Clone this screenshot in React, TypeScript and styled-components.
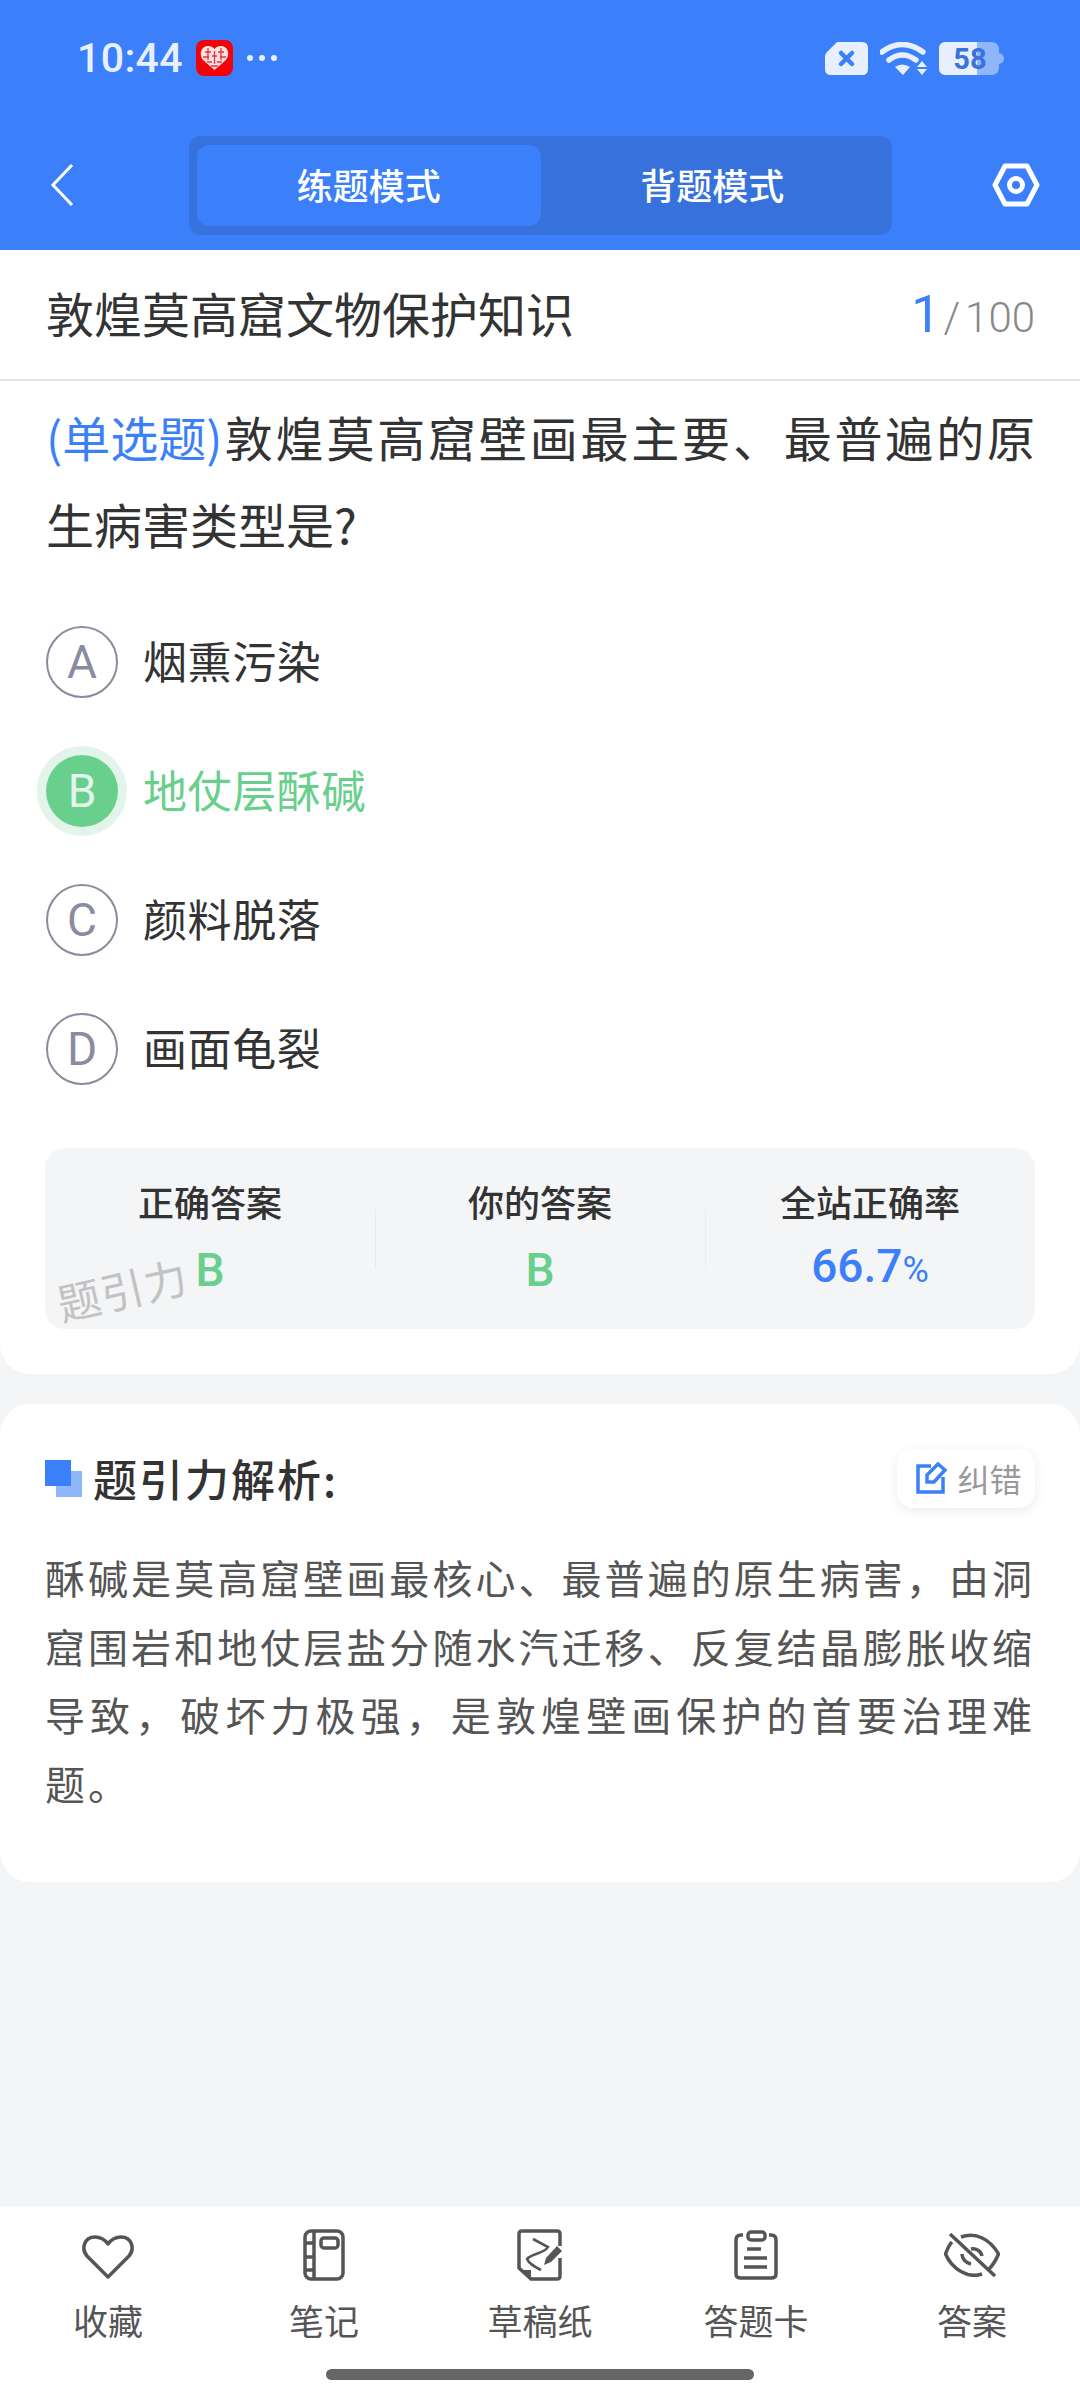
import React from "react";
import styled, { createGlobalStyle } from "styled-components";

const FONT = `"Noto Sans CJK SC", "Noto Sans", Roboto, sans-serif`;

const Global = createGlobalStyle`
  html, body {
    margin: 0;
    padding: 0;
    background: #f4f5f7;
    font-family: ${FONT};
  }
  * { box-sizing: border-box; }
`;

const Page = styled.div`
  width: 1080px;
  height: 2400px;
  display: flex;
  flex-direction: column;
  background: #f4f5f7;
  overflow: hidden;
`;

const Header = styled.div`
  height: 250px;
  background: #3b7ffa;
  color: #fff;
  flex-shrink: 0;
`;

const StatusBar = styled.div`
  height: 122px;
  padding: 0 76px 6px 77px;
  display: flex;
  align-items: center;
  justify-content: space-between;
`;

const StatusGroup = styled.div<{ $gap: number }>`
  display: flex;
  align-items: center;
  gap: ${(p) => p.$gap}px;
`;

const Time = styled.span`
  font-family: Roboto, sans-serif;
  font-size: 41px;
  font-weight: 500;
  letter-spacing: 0.4px;
  color: #e8f0ff;
`;

const Nav = styled.div`
  height: 128px;
  padding: 13px 40px 15px 50px;
  display: flex;
  align-items: center;
`;

const Tabs = styled.div`
  width: 703px;
  height: 99px;
  margin: 0 auto 0 115px;
  padding: 9px 8px;
  display: flex;
  background: #3671dc;
  border-radius: 12px;
`;

const Tab = styled.div<{ $active?: boolean }>`
  flex: 1;
  display: flex;
  align-items: center;
  justify-content: center;
  padding-bottom: 2px;
  border-radius: 12px;
  font-size: 36px;
  font-weight: 500;
  color: #fff;
  background: ${(p) => (p.$active ? "#3b7ffa" : "transparent")};
`;

const QuestionCard = styled.div`
  height: 1124px;
  background: #fff;
  border-radius: 0 0 30px 30px;
  flex-shrink: 0;
`;

const TitleRow = styled.div`
  height: 131px;
  padding: 0 45px 6px 46px;
  display: flex;
  align-items: center;
  justify-content: space-between;
  border-bottom: 2px solid #e4e4e6;
`;

const Title = styled.div`
  font-size: 48px;
  color: #333;
`;

const Progress = styled.div`
  display: flex;
  align-items: baseline;
  margin-top: 6px;
  font-family: Roboto, sans-serif;
  font-size: 42px;
  font-weight: 300;
  color: #888;
`;

const ProgressNow = styled.span`
  font-size: 52px;
  font-weight: 400;
  color: #3b7ffa;
  margin-right: 3px;
`;

const ProgressSlash = styled.span`
  margin-right: 5px;
`;

const QuestionText = styled.div`
  padding: 12px 45px 0 46px;
  font-size: 48px;
  line-height: 87px;
  color: #333;
  text-align: justify;
`;

const QType = styled.span`
  display: inline-block;
  width: 180px;
  margin-right: -4px;
  white-space: nowrap;
  color: #3b7ffa;
`;

const Options = styled.div`
  margin-top: 30px;
  padding: 0 46px;
`;

const OptionRow = styled.div`
  height: 129px;
  display: flex;
  align-items: center;
  gap: 25px;
`;

const OptionMark = styled.div<{ $right?: boolean }>`
  width: 72px;
  height: 72px;
  border-radius: 50%;
  display: flex;
  align-items: center;
  justify-content: center;
  font-family: Roboto, sans-serif;
  font-size: 46px;
  color: ${(p) => (p.$right ? "#e3f5ea" : "#8a8c9e")};
  background: ${(p) => (p.$right ? "#69cf8c" : "#fff")};
  border: ${(p) => (p.$right ? "none" : "2px solid #8a8c9e")};
  box-shadow: ${(p) => (p.$right ? "0 0 0 9px #e3f5ea" : "none")};
`;

const OptionText = styled.div<{ $right?: boolean }>`
  margin-bottom: 4px;
  font-size: 44px;
  letter-spacing: 0.6px;
  color: ${(p) => (p.$right ? "#69cf8c" : "#333")};
`;

const Stats = styled.div`
  position: relative;
  margin: 35px 45px 0;
  height: 181px;
  background: #f4f5f7;
  border-radius: 20px;
  display: grid;
  grid-template-columns: repeat(3, 1fr);
  align-items: center;
`;

const Stat = styled.div<{ $line?: boolean }>`
  position: relative;
  height: 120px;
  margin-top: -3px;
  display: flex;
  flex-direction: column;
  align-items: center;
  justify-content: space-between;
  &::before {
    content: "";
    display: ${(p) => (p.$line ? "block" : "none")};
    position: absolute;
    left: 0;
    top: 32px;
    width: 1px;
    height: 60px;
    background: #e9ebee;
  }
`;

const StatLabel = styled.div`
  font-size: 36px;
  line-height: 48px;
  font-weight: 500;
  color: #333;
`;

const StatValue = styled.div<{ $blue?: boolean }>`
  font-family: Roboto, sans-serif;
  font-size: 46px;
  line-height: 54px;
  font-weight: 500;
  color: ${(p) => (p.$blue ? "#3b7ffa" : "#69cf8c")};
`;

const Percent = styled.span`
  font-size: 36px;
  font-weight: 400;
`;

const Watermark = styled.div`
  position: absolute;
  left: 11px;
  top: 112px;
  font-size: 43px;
  line-height: 56px;
  letter-spacing: 1px;
  color: #c2c2c2;
  transform: rotate(-13deg);
`;

const AnalysisCard = styled.div`
  margin-top: 30px;
  height: 478px;
  padding: 42px 45px 0;
  background: #fff;
  border-radius: 30px;
  flex-shrink: 0;
`;

const AnalysisHead = styled.div`
  display: flex;
  align-items: center;
  justify-content: space-between;
`;

const AnalysisTitle = styled.div`
  display: flex;
  align-items: center;
  gap: 11px;
  font-size: 44px;
  font-weight: 500;
  letter-spacing: 2px;
  color: #333;
`;

const Squares = styled.div`
  position: relative;
  width: 37px;
  height: 37px;
  &::before {
    content: "";
    position: absolute;
    left: 11px;
    top: 11px;
    width: 26px;
    height: 26px;
    background: #8fb8fc;
  }
  &::after {
    content: "";
    position: absolute;
    left: 0;
    top: 0;
    width: 26px;
    height: 26px;
    background: #3b7ffa;
  }
`;

const ReportButton = styled.div`
  width: 138px;
  height: 59px;
  padding-left: 6px;
  display: flex;
  align-items: center;
  justify-content: center;
  gap: 10px;
  font-size: 32px;
  color: #999;
  background: #fff;
  border-radius: 16px;
  box-shadow: 0 3px 12px rgba(0, 0, 0, 0.08);
`;

const AnalysisText = styled.div`
  margin-top: 33px;
  font-size: 40px;
  line-height: 68.6px;
  letter-spacing: 3px;
  color: #555;
  text-align: justify;
`;

const Spacer = styled.div`
  flex: 1;
`;

const BottomBar = styled.div`
  height: 195px;
  flex-shrink: 0;
  background: #fff;
  border-top: 1px solid #eeeff1;
  position: relative;
`;

const BottomItems = styled.div`
  display: grid;
  grid-template-columns: repeat(5, 1fr);
  padding-top: 21px;
`;

const BottomItem = styled.div`
  display: flex;
  flex-direction: column;
  align-items: center;
  gap: 13px;
  font-size: 35px;
  line-height: 48px;
  color: #555;
`;

const IconBox = styled.div`
  width: 60px;
  height: 56px;
  display: flex;
  align-items: center;
  justify-content: center;
`;

const HomeBar = styled.div`
  position: absolute;
  left: 326px;
  top: 163px;
  width: 428px;
  height: 11px;
  border-radius: 6px;
  background: #666;
`;

const stroke = { fill: "none", stroke: "#555", strokeWidth: 3.5 } as const;

const BackIcon = () => (
  <svg width="24" height="42" viewBox="0 0 24 42">
    <path d="M22 1 L3 21 L22 41" fill="none" stroke="#fff" strokeWidth="3" />
  </svg>
);

const GearIcon = () => (
  <svg width="48" height="44" viewBox="0 0 48 44">
    <path d="M13 3 H35 L45 22 L35 41 H13 L3 22 Z" fill="none" stroke="#fff" strokeWidth="5" strokeLinejoin="round" />
    <circle cx="24" cy="22" r="6.5" fill="none" stroke="#fff" strokeWidth="5" />
  </svg>
);

const AppBadge = () => (
  <svg width="37" height="36" viewBox="0 0 37 36">
    <rect width="37" height="36" rx="8" fill="#f40008" />
    <path d="M18.5 30 L7 20 C2 13 6 6 12 6 C15 6 17 7 18.5 9 C20 7 22 6 25 6 C31 6 35 13 30 20 Z" fill="#fde4e4" />
    <path d="M9 12 H15 M22 12 H28 M7 17 H13 M16 16 H21 M24 17 H30 M11 22 H16 M21 22 H26 M15 26 H22 M18.5 11 V24 M12 8 V20 M25 8 V20" stroke="#ee3030" strokeWidth="1.3" />
  </svg>
);

const Dots = () => (
  <svg width="32" height="8" viewBox="0 0 32 8">
    <circle cx="4" cy="4" r="3" fill="#e8f0ff" />
    <circle cx="16" cy="4" r="3" fill="#e8f0ff" />
    <circle cx="28" cy="4" r="3" fill="#e8f0ff" />
  </svg>
);

const CloseChip = () => (
  <svg width="43" height="33" viewBox="0 0 43 33">
    <path d="M12 0 H37 Q43 0 43 6 V27 Q43 33 37 33 H6 Q0 33 0 27 V14 Q0 11 3 9 Z" fill="#e8f0ff" />
    <path d="M16 11 L27 22 M27 11 L16 22" stroke="#3b7ffa" strokeWidth="4.5" strokeLinecap="round" />
  </svg>
);

const Wifi = () => (
  <svg width="47" height="33" viewBox="0 0 47 33">
    <path d="M2 10 Q22 -5 43 10" fill="none" stroke="#e8f0ff" strokeWidth="5.5" strokeLinecap="round" />
    <path d="M9 18 Q22 8 36 18" fill="none" stroke="#e8f0ff" strokeWidth="5.5" strokeLinecap="round" />
    <path d="M15 25 Q22 20 30 25 L23 33 Z" fill="#e8f0ff" />
    <path d="M42 19 L47 25 H37 Z M37 27 H47 L42 33 Z" fill="#e8f0ff" />
  </svg>
);

const Battery = () => (
  <svg width="65" height="33" viewBox="0 0 65 33">
    <path d="M7 0 H52 Q60 0 60 8 V25 Q60 33 52 33 H7 Q0 33 0 26 V7 Q0 0 7 0 Z" fill="#8fb5fb" />
    <path d="M60 11 Q65 12 65 16.5 Q65 21 60 22 Z" fill="#8fb5fb" />
    <path d="M7 0 H38 V33 H7 Q0 33 0 26 V7 Q0 0 7 0 Z" fill="#e8f0ff" />
    <text x="31" y="27" textAnchor="middle" fontFamily="Roboto, sans-serif" fontWeight="700" fontSize="29" fill="#3a72dc">58</text>
  </svg>
);

const HeartIcon = () => (
  <svg width="52" height="50" viewBox="0 -4 52 50">
    <path d="M26 43 L5 22 C-1 15 2 3 13 3 C19 3 23 6 26 10 C29 6 33 3 39 3 C50 3 53 15 47 22 Z" {...stroke} strokeLinejoin="round" />
  </svg>
);

const NoteIcon = () => (
  <svg width="42" height="52" viewBox="0 0 42 52">
    <rect x="2" y="2" width="38" height="48" rx="6" {...stroke} />
    <path d="M11 2 V50 M2 14 H11 M2 28 H11 M2 41 H11" {...stroke} />
    <rect x="18" y="9" width="17" height="10" rx="3" {...stroke} />
  </svg>
);

const DraftIcon = () => (
  <svg width="46" height="52" viewBox="0 0 46 52">
    <path d="M43 17 V5 Q43 2 40 2 H5 Q2 2 2 5 V39 L14 50 H40 Q43 50 43 47 V29" {...stroke} />
    <path d="M4 41 H14 V50 Z" fill="#555" />
    <path d="M16 10 L31 18 C28 24 14 25 10 30 C12 35 18 38 24 41" fill="none" stroke="#555" strokeWidth="2.6" />
    <path d="M27 36 L29 29 L40 17 L45 22 L34 33 Z" fill="#555" />
  </svg>
);

const CardIcon = () => (
  <svg width="44" height="50" viewBox="0 0 44 50">
    <path d="M9 5 H7 Q2 5 2 10 V44 Q2 48 7 48 H37 Q42 48 42 44 V10 Q42 5 37 5 H35" {...stroke} />
    <rect x="14" y="2" width="17" height="8" rx="3" {...stroke} />
    <path d="M13 19 H27 M10 28 H33 M10 37 H33" {...stroke} />
  </svg>
);

const EyeOffIcon = () => (
  <svg width="56" height="44" viewBox="0 0 56 44">
    <path d="M17 4 C32 -1 46 6 54.5 21 C52 27 49 32 45 36" {...stroke} />
    <path d="M8 9 C5 12 3 17 1.5 21 C8 36 24 46 38 41" {...stroke} />
    <path d="M27 16 C32 15 37 18 38 23 M18 21 C18 26 22 30 27 31" {...stroke} />
    <path d="M6 1 L51 43" {...stroke} />
  </svg>
);

const EditIcon = () => (
  <svg width="31" height="32" viewBox="0 0 31 32">
    <path d="M15 4 H2 V30 H27 V15" fill="none" stroke="#3b7ffa" strokeWidth="3.5" />
    <path d="M11 13 L22 2 L29 8 L18 20 L11 20 Z" fill="none" stroke="#3b7ffa" strokeWidth="3.5" />
  </svg>
);

const options = [
  { mark: "A", text: "烟熏污染" },
  { mark: "B", text: "地仗层酥碱", right: true },
  { mark: "C", text: "颜料脱落" },
  { mark: "D", text: "画面龟裂" },
];

const bottomItems = [
  { label: "收藏", icon: <HeartIcon /> },
  { label: "笔记", icon: <NoteIcon /> },
  { label: "草稿纸", icon: <DraftIcon /> },
  { label: "答题卡", icon: <CardIcon /> },
  { label: "答案", icon: <EyeOffIcon /> },
];

const analysis =
  "酥碱是莫高窟壁画最核心、最普遍的原生病害\uFF0C由洞窟围岩和地仗层盐分随水汽迁移、反复结晶膨胀收缩导致\uFF0C破坏力极强\uFF0C是敦煌壁画保护的首要治理难题。";

const App = () => {
  return (
    <Page>
      <Global />
      <Header>
        <StatusBar>
          <StatusGroup $gap={13}>
            <Time>10:44</Time>
            <AppBadge />
            <Dots />
          </StatusGroup>
          <StatusGroup $gap={12}>
            <CloseChip />
            <Wifi />
            <Battery />
          </StatusGroup>
        </StatusBar>
        <Nav>
          <BackIcon />
          <Tabs>
            <Tab $active>练题模式</Tab>
            <Tab>背题模式</Tab>
          </Tabs>
          <GearIcon />
        </Nav>
      </Header>
      <QuestionCard>
        <TitleRow>
          <Title>敦煌莫高窟文物保护知识</Title>
          <Progress>
            <ProgressNow>1</ProgressNow>
            <ProgressSlash>/</ProgressSlash>100
          </Progress>
        </TitleRow>
        <QuestionText>
          <QType>(单选题)</QType>敦煌莫高窟壁画最主要、最普遍的原生病害类型是?
        </QuestionText>
        <Options>
          {options.map((o) => (
            <OptionRow key={o.mark}>
              <OptionMark $right={o.right}>{o.mark}</OptionMark>
              <OptionText $right={o.right}>{o.text}</OptionText>
            </OptionRow>
          ))}
        </Options>
        <Stats>
          <Stat>
            <StatLabel>正确答案</StatLabel>
            <StatValue>B</StatValue>
          </Stat>
          <Stat $line>
            <StatLabel>你的答案</StatLabel>
            <StatValue>B</StatValue>
          </Stat>
          <Stat $line>
            <StatLabel>全站正确率</StatLabel>
            <StatValue $blue>
              66.7<Percent>%</Percent>
            </StatValue>
          </Stat>
          <Watermark>题引力</Watermark>
        </Stats>
      </QuestionCard>
      <AnalysisCard>
        <AnalysisHead>
          <AnalysisTitle>
            <Squares />
            题引力解析:
          </AnalysisTitle>
          <ReportButton>
            <EditIcon />
            纠错
          </ReportButton>
        </AnalysisHead>
        <AnalysisText>{analysis}</AnalysisText>
      </AnalysisCard>
      <Spacer />
      <BottomBar>
        <BottomItems>
          {bottomItems.map((b) => (
            <BottomItem key={b.label}>
              <IconBox>{b.icon}</IconBox>
              {b.label}
            </BottomItem>
          ))}
        </BottomItems>
        <HomeBar />
      </BottomBar>
    </Page>
  );
};

export default App;
